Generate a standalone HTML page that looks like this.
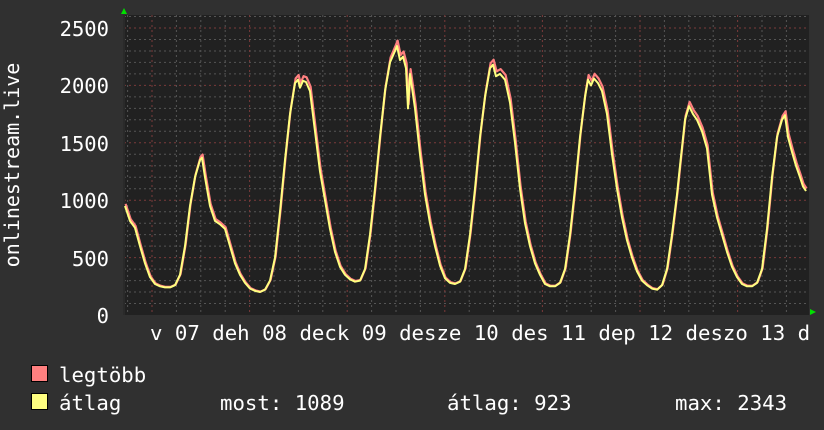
<!DOCTYPE html>
<html><head><meta charset="utf-8"><style>
html,body{margin:0;padding:0;background:#303030;width:824px;height:430px;overflow:hidden}
text{font-family:"DejaVu Sans Mono","Liberation Mono",monospace;fill:#fff}
</style></head><body>
<svg width="824" height="430" xmlns="http://www.w3.org/2000/svg">
<rect width="824" height="430" fill="#303030"/>
<rect x="124" y="15" width="685" height="300" fill="#212121"/>
<g id="grid"></g>
<polyline id="mx" fill="none" stroke="#ff8080" stroke-width="2.2" stroke-linejoin="round"/>
<polyline id="av" fill="none" stroke="#ffff80" stroke-width="2" stroke-linejoin="round"/>
<polygon points="121,14 127,14 124,8" fill="#00e000"/>
<polygon points="810,309 810,315 816,312" fill="#00e000"/>
<g font-size="20.5" text-anchor="end">
<text x="109" y="36">2500</text>
<text x="109" y="93">2000</text>
<text x="109" y="151">1500</text>
<text x="109" y="208">1000</text>
<text x="109" y="266">500</text>
<text x="109" y="323">0</text>
</g>
<text transform="translate(19,165) rotate(-90)" font-size="20" text-anchor="middle">onlinestream.live</text>
<text x="150" y="340" font-size="20.7">v 07 deh 08 deck 09 desze 10 des 11 dep 12 deszo 13 d</text>
<rect x="31.5" y="365.5" width="16" height="16" fill="#ff8080" stroke="#000"/>
<rect x="31.5" y="393.5" width="16" height="16" fill="#ffff80" stroke="#000"/>
<g font-size="20.7">
<text x="59" y="382">legtöbb</text>
<text x="59" y="410">átlag</text>
<text x="220" y="410">most: 1089</text>
<text x="447" y="410">átlag: 923</text>
<text x="675" y="410">max: 2343</text>
</g>
</svg>
<script>
var g=document.getElementById('grid'),s='';
function Y(v){return 315-v*0.1148;}
for(var v=100;v<=2600;v+=100){var y=Y(v).toFixed(1);var maj=v%500==0;
s+='<line x1="124" x2="809" y1="'+y+'" y2="'+y+'" stroke="'+(maj?'#7a3a3a':'#555')+'" stroke-dasharray="2,3"/>';}
for(var x=152-97.6;x<809;x+=24.4){if(x<125)continue;var k=Math.round((x-152)/24.4);var maj=(k%4==0);
s+='<line y1="15" y2="315" x1="'+x.toFixed(1)+'" x2="'+x.toFixed(1)+'" stroke="'+(maj?'#7a3a3a':'#555')+'" stroke-dasharray="2,3"/>';}
s+='<line x1="124" x2="124" y1="15" y2="315" stroke="#2a2a2a" stroke-width="2"/>';
g.innerHTML=s;
var d=[125,950,130,820,135,760,140,600,145,450,150,330,155,270,160,250,165,240,170,240,175,260,180,350,185,600,190,950,195,1200,200,1350,202,1370,205,1200,210,950,215,820,220,790,225,750,230,600,235,450,240,350,245,280,250,230,255,210,260,200,265,220,270,300,275,500,280,900,285,1350,290,1750,295,2020,298,2050,300,1980,303,2040,306,2030,310,1950,315,1600,320,1250,325,1000,330,750,335,550,340,420,345,350,350,310,355,290,360,300,365,400,370,700,375,1100,380,1550,385,1950,390,2200,395,2300,397,2343,400,2220,403,2250,406,2150,408,1800,410,2100,415,1800,420,1400,425,1050,430,800,435,600,440,430,445,320,450,280,455,270,460,290,465,400,470,700,475,1100,480,1550,485,1900,490,2150,493,2180,496,2080,500,2100,505,2050,510,1850,515,1500,520,1100,525,800,530,600,535,450,540,350,545,270,550,250,555,250,560,280,565,400,570,700,575,1100,580,1550,585,1900,588,2050,591,2000,594,2060,598,2020,602,1950,607,1750,612,1400,617,1100,622,850,627,650,632,500,637,380,642,300,647,260,652,230,657,220,662,260,667,400,672,700,677,1050,680,1300,685,1700,689,1820,693,1750,697,1700,702,1600,707,1450,712,1050,717,850,722,700,727,550,732,420,737,330,742,270,747,250,752,250,757,280,762,400,767,750,772,1200,777,1550,782,1700,785,1740,788,1550,792,1420,796,1300,800,1200,803,1120,806,1080];
var a='',m='';
for(var i=0;i<d.length;i+=2){a+=d[i]+','+Y(d[i+1]).toFixed(1)+' ';m+=(d[i]+0.6)+','+Y(d[i+1]*1.02).toFixed(1)+' ';}
document.getElementById('av').setAttribute('points',a);
document.getElementById('mx').setAttribute('points',m);
</script>
</body></html>
